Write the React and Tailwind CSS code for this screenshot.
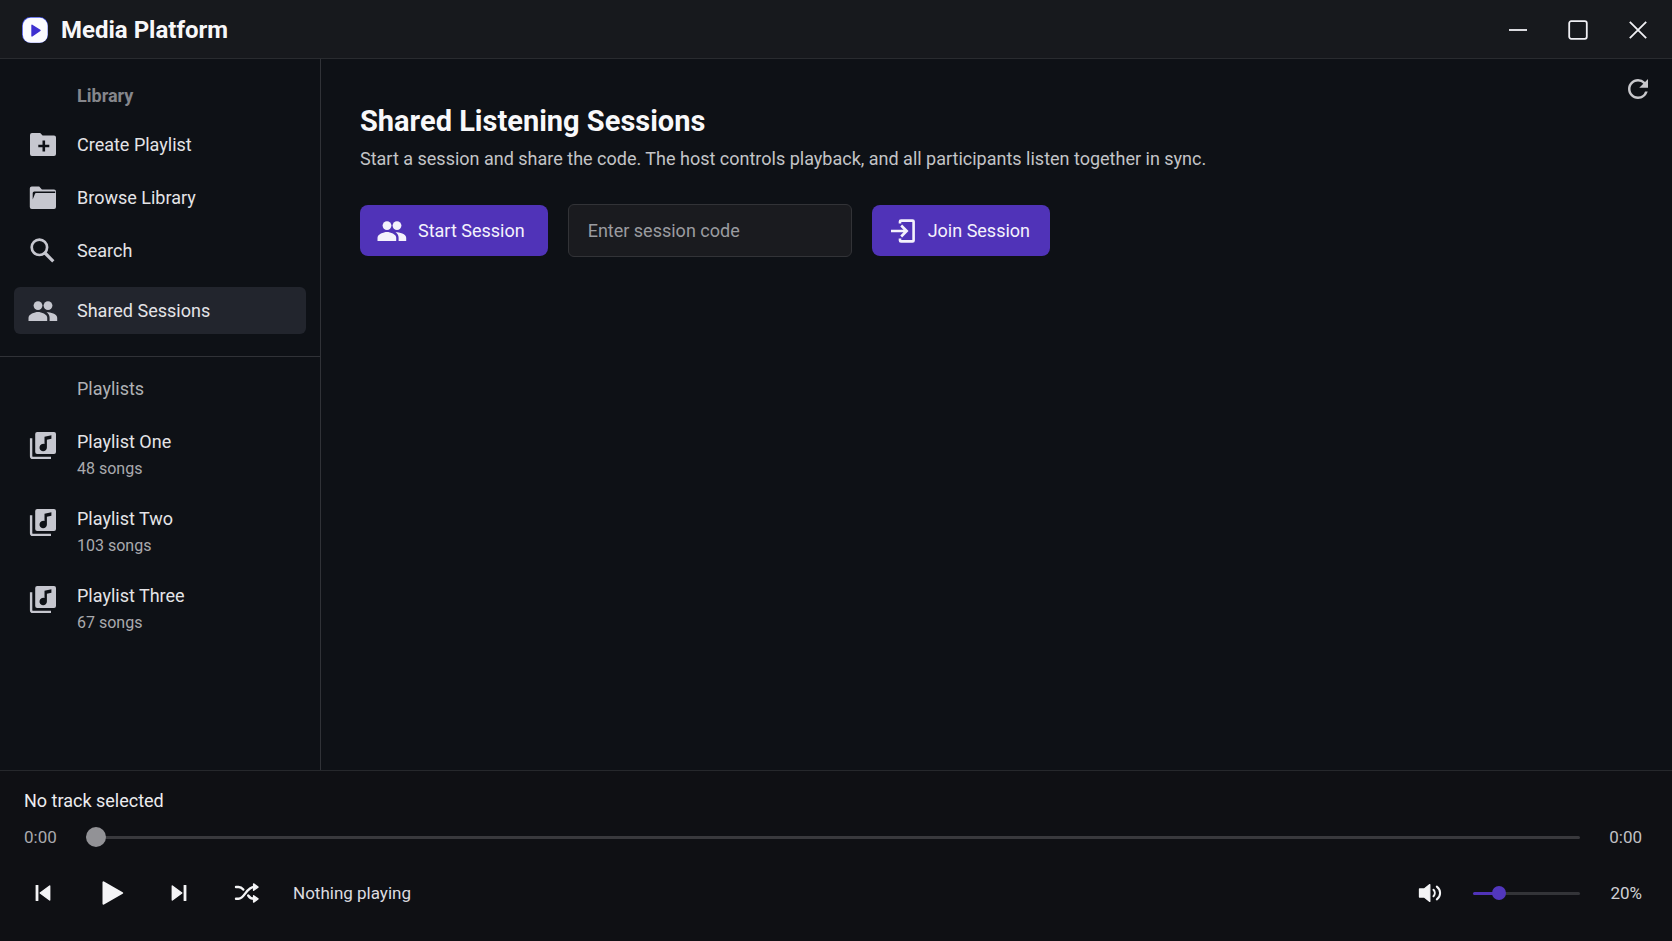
import { useState } from 'react';
import { MdRefresh } from 'react-icons/md';

function LogoIcon() {
  return (
    <svg viewBox="0 0 26 26" className="size-[26px] shrink-0" aria-hidden="true">
      <rect x="0" y="0" width="26" height="26" rx="8.500" fill="#4453e6" />
      <rect x="0.800" y="0.800" width="24.800" height="25" rx="8" fill="#fbfbff" />
      <path d="M10 8.300 18 13.400 10 18.900Z" fill="#3d2fd0" stroke="#3d2fd0" strokeWidth="1.400" strokeLinejoin="round" />
    </svg>
  );
}

function FolderPlusIcon() {
  return (
    <svg viewBox="0 0 32 32" className="size-8 shrink-0" aria-hidden="true">
      <path
        fill="currentColor"
        fillRule="evenodd"
        d="M5 4h8.200l2.400 2.600H27a2 2 0 0 1 2 2V25a2 2 0 0 1-2 2H5a2 2 0 0 1-2-2V6a2 2 0 0 1 2-2ZM15.500 11.500v4.200h-4.200v2.600h4.200v4.200h2.600v-4.200h4.200v-2.600h-4.200v-4.200Z"
      />
    </svg>
  );
}

function FolderIcon() {
  return (
    <svg viewBox="0 0 32 32" className="size-8 shrink-0" aria-hidden="true">
      <path
        fill="currentColor"
        d="M4.800 4.500h7.400l2.700 3H27a2 2 0 0 1 2 2V25a2 2 0 0 1-2 2H4.800a2 2 0 0 1-2-2V6.500a2 2 0 0 1 2-2Z"
      />
      <path d="M5.700 17.500V11a1.600 1.600 0 0 1 1.600-1.600H28.200V11H9.300a1.500 1.500 0 0 0-1.500 1.200Z" fill="#0d1015" />
    </svg>
  );
}

function SearchIcon() {
  return (
    <svg viewBox="0 0 32 32" className="size-8 shrink-0" fill="none" stroke="currentColor" aria-hidden="true">
      <circle cx="12.400" cy="12.300" r="7.700" strokeWidth="2.700" />
      <path d="M18 18 26.300 26.300" strokeWidth="3.200" />
    </svg>
  );
}

function PeopleIcon() {
  return (
    <svg viewBox="0 0 32 32" className="size-8 shrink-0" fill="currentColor" aria-hidden="true">
      <circle cx="11" cy="10.600" r="4.400" />
      <circle cx="21" cy="10.600" r="4.400" />
      <path d="M1.500 26V22.800C1.500 19.200 7.500 17 11 17s9.200 2.200 9.200 5.800V26Z" />
      <path d="M19.500 17.300C23.500 17.300 30.200 18.900 30.200 22.800V26H22.600V22.800C22.600 20.400 21.400 18.600 19.500 17.300Z" />
    </svg>
  );
}

function PlaylistIcon() {
  return (
    <svg viewBox="0 0 32 32" className="size-8 shrink-0" aria-hidden="true">
      <path d="M4.100 8.200V26.300a1.600 1.600 0 0 0 1.600 1.600H24" fill="none" stroke="currentColor" strokeWidth="2.400" />
      <path
        fill="currentColor"
        fillRule="evenodd"
        d="M10.200 2H27a2 2 0 0 1 2 2V22a2 2 0 0 1-2 2H10.200a2 2 0 0 1-2-2V4a2 2 0 0 1 2-2ZM17.500 6.700V14.100a3.700 3.700 0 1 0 2.400 3.400V9.700l4.500-1V5.300Z"
      />
    </svg>
  );
}

function JoinIcon() {
  return (
    <svg viewBox="0 0 26 26" className="size-[26px] shrink-0" fill="none" stroke="currentColor" strokeWidth="2.600" aria-hidden="true">
      <path d="M10 5.500V3.600a1 1 0 0 1 1-1H22.600a1 1 0 0 1 1 1V22.400a1 1 0 0 1-1 1H11a1 1 0 0 1-1-1V20.500" />
      <path d="M1 13H15.500M11.200 7.500 16.700 13 11.200 18.500" />
    </svg>
  );
}

function PreviousIcon() {
  return (
    <svg viewBox="0 0 16 18" className="h-[18px] w-4" fill="currentColor" aria-hidden="true">
      <rect x="0.600" y="1" width="2.800" height="16" rx="0.600" />
      <path d="M14.700 2V16L5.200 9Z" stroke="currentColor" strokeWidth="1.400" strokeLinejoin="round" />
    </svg>
  );
}

function NextIcon() {
  return (
    <svg viewBox="0 0 16 18" className="h-[18px] w-4" fill="currentColor" aria-hidden="true">
      <rect x="12.600" y="1" width="2.800" height="16" rx="0.600" />
      <path d="M1.300 2V16L10.800 9Z" stroke="currentColor" strokeWidth="1.400" strokeLinejoin="round" />
    </svg>
  );
}

function PlayIcon() {
  return (
    <svg viewBox="0 0 22 26" className="ml-1 h-[26px] w-[22px]" fill="currentColor" aria-hidden="true">
      <path d="M1.500 2.300V23.700L20.200 13Z" stroke="currentColor" strokeWidth="2" strokeLinejoin="round" />
    </svg>
  );
}

function ShuffleIcon() {
  return (
    <svg viewBox="0 0 26 22" className="h-[22px] w-[26px]" fill="none" stroke="currentColor" strokeWidth="2.400" strokeLinecap="round" aria-hidden="true">
      <path d="M2 5H4.500C7 5 8 6 9.300 7.600M14.200 13.500C15.500 15.500 17.300 16.800 20 16.800" />
      <path d="M2 16.800H4.500C10.500 16.800 12.500 5 20 5" />
      <path d="M19.600 1.900 24 5.100 19.600 8.300ZM19.600 13.700 24 16.900 19.600 20.100Z" fill="currentColor" strokeWidth="1.400" strokeLinejoin="round" />
    </svg>
  );
}

function VolumeIcon() {
  return (
    <svg viewBox="0 0 24 20" className="h-5 w-6" fill="none" stroke="currentColor" strokeWidth="2" strokeLinecap="round" aria-hidden="true">
      <path d="M1.500 6H6.200L11.800 1.600V18.400L6.200 14H1.500Z" fill="currentColor" strokeWidth="1.300" strokeLinejoin="round" />
      <path d="M15.500 6.800C17.200 8.600 17.200 11.400 15.500 13.200M18.800 3.600C23.200 7 23.200 13 18.800 16.400" />
    </svg>
  );
}

const navItems = [
  { label: 'Create Playlist', icon: <FolderPlusIcon /> },
  { label: 'Browse Library', icon: <FolderIcon /> },
  { label: 'Search', icon: <SearchIcon /> },
  { label: 'Shared Sessions', icon: <PeopleIcon />, active: true },
];

const playlists = [
  { name: 'Playlist One', songs: '48 songs' },
  { name: 'Playlist Two', songs: '103 songs' },
  { name: 'Playlist Three', songs: '67 songs' },
];

function TitleBar() {
  return (
    <header className="flex h-[59px] shrink-0 items-center justify-between border-b border-[#292b2f] bg-[#17191d] pt-[2px] pr-[14px] pl-[22px]">
      <div className="flex items-center gap-[13px]">
        <LogoIcon />
        <span className="text-[24px] leading-8 font-bold text-[#f7f7f9]">Media Platform</span>
      </div>
      <div className="flex gap-5 text-[#f0f0f4]">
        <button type="button" aria-label="Minimize" className="flex size-10 items-center justify-center">
          <svg viewBox="0 0 20 20" className="size-5" fill="none" stroke="currentColor" strokeWidth="1.800">
            <path d="M1 10H19" />
          </svg>
        </button>
        <button type="button" aria-label="Maximize" className="flex size-10 items-center justify-center">
          <svg viewBox="0 0 20 20" className="size-5" fill="none" stroke="currentColor" strokeWidth="1.800">
            <rect x="1.200" y="1.200" width="17.600" height="17.600" rx="2" />
          </svg>
        </button>
        <button type="button" aria-label="Close" className="flex size-10 items-center justify-center">
          <svg viewBox="0 0 20 20" className="size-5" fill="none" stroke="currentColor" strokeWidth="1.800">
            <path d="M1.800 1.800 18.200 18.200M18.200 1.800 1.800 18.200" />
          </svg>
        </button>
      </div>
    </header>
  );
}

function Sidebar() {
  return (
    <aside className="w-[321px] shrink-0 border-r border-[#303237]">
      <nav aria-label="Library" className="border-b border-[#303237] px-[14px] pt-[25px] pb-[22px]">
        <h2 className="mb-[13px] pl-[63px] text-[18px] leading-6 font-bold text-[#85868b]">Library</h2>
        <ul className="flex flex-col gap-[5px]">
          {navItems.map((item) => (
            <li key={item.label} className={item.active ? 'mt-[7px]' : ''}>
              <a
                href="#"
                aria-current={item.active ? 'page' : undefined}
                className={
                  item.active
                    ? 'flex h-[47px] items-center gap-[18px] rounded-md bg-[#22252d] px-[13px] text-[#c6c7cf]'
                    : 'flex h-12 items-center gap-[18px] rounded-md px-[13px] text-[#c6c7cf]'
                }
              >
                {item.icon}
                <span className="text-[18px] leading-6 text-[#e4e4e7]">{item.label}</span>
              </a>
            </li>
          ))}
        </ul>
      </nav>
      <section className="px-[14px] pt-5">
        <h2 className="mb-[29px] pl-[63px] text-[18px] leading-6 text-[#b0b1b5]">Playlists</h2>
        <ul className="flex flex-col gap-[26px]">
          {playlists.map((playlist) => (
            <li key={playlist.name}>
              <a href="#" className="flex items-start gap-[18px] px-[13px] text-[#c6c7cf]">
                <PlaylistIcon />
                <span className="flex flex-col gap-[3px]">
                  <span className="text-[18px] leading-6 text-[#e4e4e7]">{playlist.name}</span>
                  <span className="text-[16px] leading-6 text-[#a9aaae]">{playlist.songs}</span>
                </span>
              </a>
            </li>
          ))}
        </ul>
      </section>
    </aside>
  );
}

function Sessions() {
  return (
    <main className="min-w-0 flex-1 pt-[15px] pr-[19px] pl-[39px]">
      <div className="flex justify-end">
        <button type="button" aria-label="Refresh" className="text-[#c8c8cc]">
          <MdRefresh className="size-[30px]" />
        </button>
      </div>
      <h1 className="text-[29px] leading-[34px] font-bold text-[#f8f8fa]">Shared Listening Sessions</h1>
      <p className="mt-[9px] text-[18px] leading-6 text-[#c3c4c7]">
        Start a session and share the code. The host controls playback, and all participants listen together in sync.
      </p>
      <form className="mt-[33px] flex flex-wrap items-center gap-5" onSubmit={(event) => event.preventDefault()}>
        <button type="button" className="flex h-[51px] items-center gap-[10px] rounded-lg bg-[#5033b8] pr-[23px] pl-4 text-[18px] text-[#f4f2fc]">
          <PeopleIcon />
          Start Session
        </button>
        <input
          type="text"
          aria-label="Session code"
          placeholder="Enter session code"
          className="h-[53px] w-[284px] rounded-md border border-[#323337] bg-[#1a1b1f] px-[19px] text-[18px] text-[#e4e4e7] outline-none placeholder:text-[#9b9ca0]"
        />
        <button type="submit" className="flex h-[51px] items-center gap-3 rounded-lg bg-[#5033b8] pr-5 pl-[18px] text-[18px] text-[#f4f2fc]">
          <JoinIcon />
          Join Session
        </button>
      </form>
    </main>
  );
}

function Player() {
  const [position, setPosition] = useState(0);
  const [volume, setVolume] = useState(20);

  return (
    <footer className="shrink-0 border-t border-[#26282c] bg-[#0f1014] pt-[18px] pr-[30px] pb-[28px] pl-6">
      <p className="text-[18px] leading-6 text-[#ececef]">No track selected</p>
      <div className="mt-3 flex items-center">
        <span className="w-[62px] text-[17px] leading-6 text-[#a9aaae]">0:00</span>
        <input
          type="range"
          aria-label="Seek"
          min="0"
          max="100"
          value={position}
          onChange={(event) => setPosition(Number(event.target.value))}
          className="h-5 min-w-0 flex-1 appearance-none bg-transparent [&::-webkit-slider-runnable-track]:h-[3px] [&::-webkit-slider-runnable-track]:rounded-full [&::-webkit-slider-runnable-track]:bg-[#39393d] [&::-webkit-slider-thumb]:-mt-[9px] [&::-webkit-slider-thumb]:size-5 [&::-webkit-slider-thumb]:appearance-none [&::-webkit-slider-thumb]:rounded-full [&::-webkit-slider-thumb]:bg-[#929296]"
        />
        <span className="w-[62px] text-right text-[17px] leading-6 text-[#c0c1c5]">0:00</span>
      </div>
      <div className="mt-[24px] flex items-center text-[#f4f4f6]">
        <div className="flex gap-[30px]">
          <button type="button" aria-label="Previous track" className="flex h-10 w-[38px] items-center justify-center">
            <PreviousIcon />
          </button>
          <button type="button" aria-label="Play" className="flex h-10 w-[38px] items-center justify-center">
            <PlayIcon />
          </button>
          <button type="button" aria-label="Next track" className="flex h-10 w-[38px] items-center justify-center">
            <NextIcon />
          </button>
          <button type="button" aria-label="Shuffle" className="flex h-10 w-[38px] items-center justify-center">
            <ShuffleIcon />
          </button>
        </div>
        <span className="ml-[27px] text-[17px] leading-6 text-[#dcdce0]">Nothing playing</span>
        <div className="ml-auto flex items-center">
          <button type="button" aria-label="Mute" className="mr-[31px] flex h-10 items-center">
            <VolumeIcon />
          </button>
          <input
            type="range"
            aria-label="Volume"
            min="0"
            max="100"
            value={volume}
            onChange={(event) => setVolume(Number(event.target.value))}
            style={{ '--level': `${volume}%` }}
            className="h-4 w-[107px] appearance-none bg-transparent [&::-webkit-slider-runnable-track]:h-[3px] [&::-webkit-slider-runnable-track]:rounded-full [&::-webkit-slider-runnable-track]:bg-[linear-gradient(to_right,#5033b8_var(--level),#333438_var(--level))] [&::-webkit-slider-thumb]:-mt-[6px] [&::-webkit-slider-thumb]:size-[14px] [&::-webkit-slider-thumb]:appearance-none [&::-webkit-slider-thumb]:rounded-full [&::-webkit-slider-thumb]:bg-[#5237bd]"
          />
          <span className="w-[62px] text-right text-[17px] leading-6 text-[#d0d0d4]">{volume}%</span>
        </div>
      </div>
    </footer>
  );
}

export default function App() {
  return (
    <div className="flex min-h-screen flex-col bg-[#0e1116] font-['Roboto',sans-serif]">
      <TitleBar />
      <div className="flex flex-1">
        <Sidebar />
        <Sessions />
      </div>
      <Player />
    </div>
  );
}
